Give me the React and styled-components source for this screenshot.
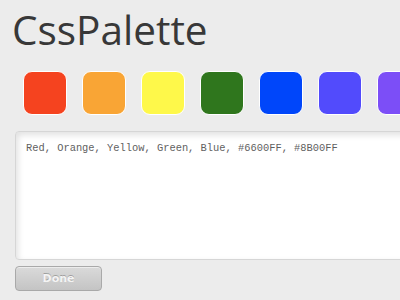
import React, { useState } from "react";
import styled, { createGlobalStyle } from "styled-components";

const GlobalStyle = createGlobalStyle`
  html, body {
    margin: 0;
    padding: 0;
    background: #ececec;
    overflow: hidden;
  }
`;

const Page = styled.div`
  width: 400px;
  height: 300px;
  overflow: hidden;
  box-sizing: border-box;
  padding: 1px 0 0 15px;
`;

const Title = styled.h1`
  margin: 0 0 0 -3px;
  padding: 4px 0 0;
  font-family: "Open Sans", sans-serif;
  font-weight: 400;
  font-size: 40.5px;
  line-height: 50px;
  color: #383838;
  white-space: nowrap;
`;

const Swatches = styled.div`
  display: flex;
  gap: 15px;
  margin: 16px 0 0 8px;
  width: 500px;
`;

const Swatch = styled.div`
  flex: none;
  width: 42px;
  height: 42px;
  border: 1px solid #fff;
  border-radius: 9px;
  background: ${(p) => p.color};
`;

const Area = styled.textarea`
  display: block;
  box-sizing: border-box;
  margin-top: 16px;
  width: 400px;
  height: 129px;
  padding: 10px 10px;
  border: 1px solid #d6d6d6;
  border-radius: 4px;
  background: #fff;
  box-shadow: inset 2px 3px 6px rgba(0, 0, 0, 0.12);
  font-family: "Liberation Mono", monospace;
  font-size: 10.4px;
  line-height: 13px;
  color: #5f5f5f;
  resize: none;
  outline: none;
`;

const Button = styled.button`
  display: block;
  margin-top: 6px;
  width: 87px;
  height: 25px;
  border: 1px solid #a9a9a9;
  border-radius: 4px;
  background: linear-gradient(#dadada, #c4c4c4);
  box-shadow: inset 0 1px 0 rgba(255, 255, 255, 0.5);
  font-family: "DejaVu Sans", sans-serif;
  font-weight: bold;
  font-size: 11px;
  color: #f4f4f4;
  text-shadow: 0 -1px 0 rgba(0, 0, 0, 0.25);
  padding: 0;
`;

const colors = ["#f5431f", "#f9a535", "#fef84a", "#2f761d", "#0046fa", "#524bfc", "#7c4ef7"];

export default function App() {
  const [value, setValue] = useState("Red, Orange, Yellow, Green, Blue, #6600FF, #8B00FF");
  return (
    <Page>
      <GlobalStyle />
      <Title>CssPalette</Title>
      <Swatches>
        {colors.map((c) => (
          <Swatch key={c} color={c} />
        ))}
      </Swatches>
      <Area value={value} onChange={(e) => setValue(e.target.value)} spellCheck={false} />
      <Button type="button">Done</Button>
    </Page>
  );
}
